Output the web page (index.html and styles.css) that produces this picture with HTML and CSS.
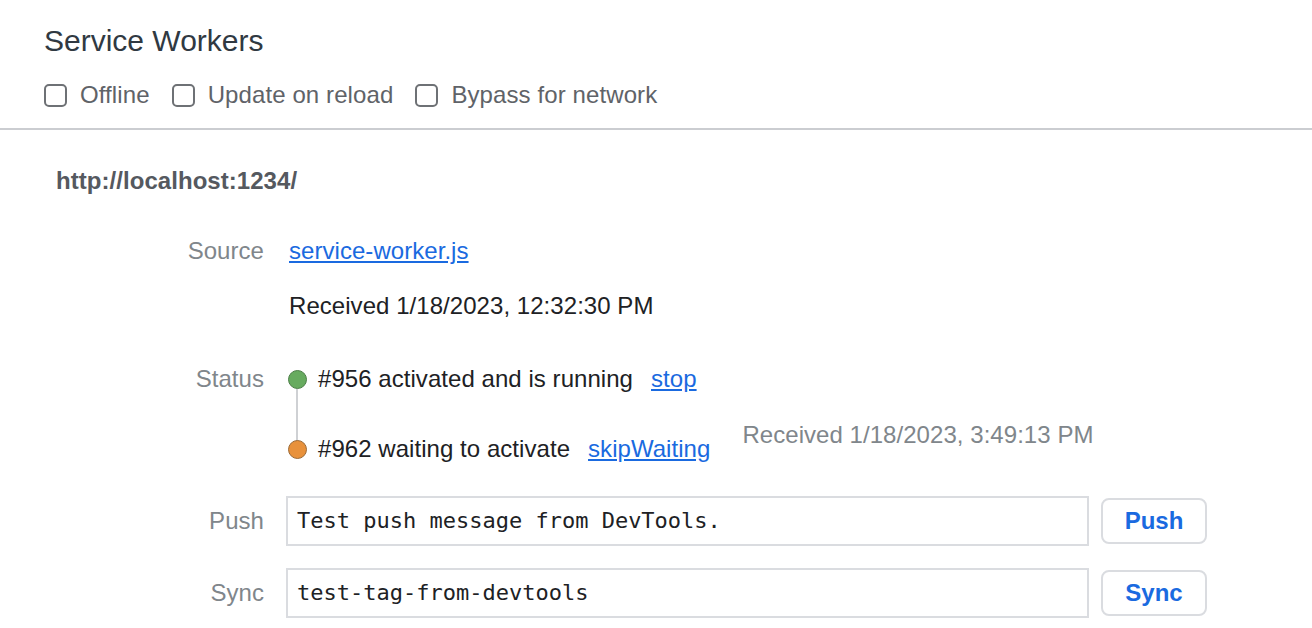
FILE: index.html
```html
<!DOCTYPE html>
<html>
<head>
<meta charset="utf-8">
<link rel="stylesheet" href="styles.css">
</head>
<body>
<div class="header">
  <div class="title">Service Workers</div>
  <div class="toolbar">
    <label class="check"><span class="box"></span><span>Offline</span></label>
    <label class="check"><span class="box"></span><span>Update on reload</span></label>
    <label class="check"><span class="box"></span><span>Bypass for network</span></label>
  </div>
</div>
<div class="section">
  <div class="origin">http://localhost:1234/</div>
  <div class="fields">
    <div class="row row-source">
      <div class="label">Source</div>
      <div class="value"><a class="link" href="#">service-worker.js</a></div>
    </div>
    <div class="row row-received">
      <div class="label"></div>
      <div class="value">Received 1/18/2023, 12:32:30 PM</div>
    </div>
    <div class="row row-status">
      <div class="label">Status</div>
      <div class="value status">
        <div class="version">
          <span class="dot dot-green"></span>
          <span class="vtext">#956 activated and is running</span>
          <a class="link" href="#">stop</a>
        </div>
        <div class="version version-waiting">
          <div class="vmain">
            <span class="dot dot-orange"></span>
            <span class="vtext">#962 waiting to activate</span>
            <a class="link" href="#">skipWaiting</a>
          </div>
          <span class="vreceived">Received 1/18/2023, 3:49:13 PM</span>
        </div>
      </div>
    </div>
    <div class="row row-form row-push">
      <div class="label">Push</div>
      <div class="value form">
        <div class="input">Test push message from DevTools.</div>
        <button class="btn">Push</button>
      </div>
    </div>
    <div class="row row-form row-sync">
      <div class="label">Sync</div>
      <div class="value form">
        <div class="input">test-tag-from-devtools</div>
        <button class="btn">Sync</button>
      </div>
    </div>
  </div>
</div>
</body>
</html>
```
FILE: styles.css
```css
* { box-sizing: border-box; }
html, body { margin: 0; padding: 0; background: #fff; }
body {
  font-family: "Liberation Sans", Arial, sans-serif;
  font-size: 24px;
  letter-spacing: 0.05px;
  color: #202124;
  width: 1312px;
  height: 628px;
  overflow: hidden;
}
.header {
  padding: 23px 44px 18px;
  border-bottom: 2px solid #cbcdd1;
}
.title {
  font-size: 30px;
  line-height: 36px;
  letter-spacing: 0;
  color: #303942;
}
.toolbar {
  display: flex;
  margin-top: 21px;
  height: 30px;
  align-items: center;
}
.check {
  display: flex;
  align-items: center;
  margin-right: 22px;
  color: #5f6368;
  line-height: 30px;
  letter-spacing: 0.1px;
}
.box {
  width: 23px;
  height: 23px;
  border: 2px solid #6e7175;
  border-radius: 5px;
  margin-right: 13px;
}
.section {
  padding: 36px 0 0 56px;
}
.origin {
  font-weight: bold;
  line-height: 30px;
  color: #55595f;
}
.fields { margin-top: 40px; }
.row {
  display: flex;
  line-height: 30px;
}
.label {
  width: 208px;
  text-align: right;
  color: #80868b;
  margin-right: 25px;
  flex: none;
}
.value { color: #202124; }
.row-received { margin-top: 25px; }
.row-status { margin-top: 43px; }
.link { color: #1a6ae0; text-decoration: underline; }
.status { display: flex; flex-direction: column; }
.version {
  display: flex;
  align-items: center;
}
.vmain { display: flex; align-items: center; margin-top: 14px; }
.version-waiting { align-items: flex-start; margin-top: 26px; }
.dot {
  position: relative;
  width: 19px;
  height: 19px;
  border-radius: 50%;
  margin-left: -1px;
  margin-right: 11px;
  flex: none;
}
.dot-green { background: #67ab5f; border: 1.5px solid #4c7f47; }
.dot-green::after {
  content: "";
  position: absolute;
  left: 7px;
  top: 18px;
  width: 2px;
  height: 52px;
  background: #cfd1d4;
}
.dot-orange { background: #e8913b; border: 1.5px solid #9c6a36; }
.vtext { margin-right: 18px; }
.vreceived { color: #80868b; margin-left: 32px; }
.row-form { align-items: center; }
.row-push { margin-top: 32px; }
.row-sync { margin-top: 22px; }
.form { display: flex; align-items: center; }
.input {
  width: 803px;
  height: 50px;
  margin-left: -3px;
  border: 2px solid #dadce0;
  padding: 0 9px;
  font-family: "DejaVu Sans Mono", monospace;
  font-size: 22px;
  letter-spacing: 0;
  line-height: 46px;
  color: #202124;
}
.btn {
  margin-left: 12px;
  width: 106px;
  height: 46px;
  border: 2px solid #dadce0;
  border-radius: 8px;
  background: #fff;
  font-family: "Liberation Sans", Arial, sans-serif;
  font-size: 24px;
  font-weight: bold;
  letter-spacing: 0;
  color: #1a6ae0;
  padding: 0;
}
```
